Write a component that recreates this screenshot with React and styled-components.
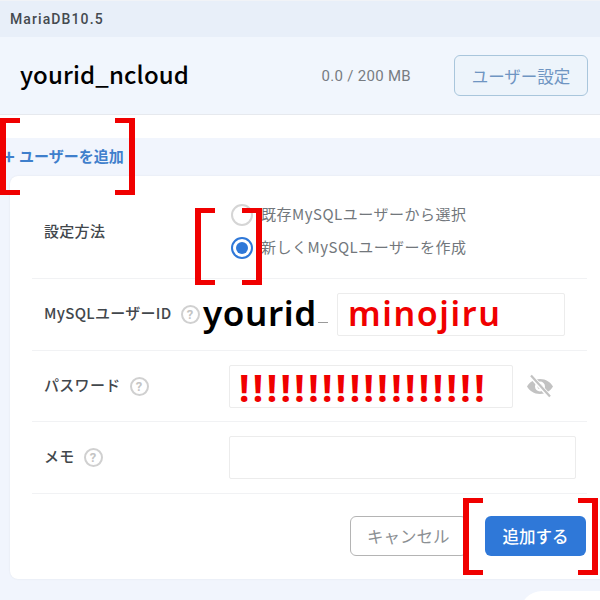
import React from "react";
import styled, { createGlobalStyle } from "styled-components";

const GlobalStyle = createGlobalStyle`
  html, body {
    margin: 0;
    padding: 0;
    background: #ffffff;
  }
  * {
    box-sizing: border-box;
  }
`;

const FONT = `"Noto Sans CJK JP", "Noto Sans", sans-serif`;

const Page = styled.div`
  position: relative;
  width: 600px;
  height: 600px;
  overflow: hidden;
  background: #ffffff;
  font-family: ${FONT};
`;

const VersionBar = styled.div`
  display: flex;
  align-items: center;
  height: 37px;
  padding-left: 10px;
  background: #e8eff9;
  border-top: 1px solid #f1f3f7;
  font-family: Roboto, sans-serif;
  font-size: 14px;
  font-weight: 500;
  letter-spacing: 1.1px;
  color: #444a50;
`;

const DbHeader = styled.div`
  display: flex;
  align-items: center;
  height: 78px;
  padding: 0 12px 0 20px;
  background: #f1f6fd;
  border-bottom: 1px solid #e6e9ee;
`;

const DbName = styled.div`
  flex: 1;
  padding-bottom: 5px;
  font-size: 24px;
  font-weight: 500;
  letter-spacing: 0.15px;
  color: #000000;
`;

const Usage = styled.div`
  margin-right: 43px;
  font-family: Roboto, sans-serif;
  font-size: 15px;
  letter-spacing: 0.3px;
  color: #777c82;
`;

const SettingsButton = styled.button`
  width: 134px;
  height: 41px;
  padding: 0;
  border: 1px solid #a9c6dc;
  border-radius: 6px;
  background: #edf4fb;
  font-family: ${FONT};
  font-size: 16.5px;
  color: #6f95c2;
`;

const Section = styled.div`
  margin-top: 23px;
  height: 462px;
  padding-left: 10px;
  background: #f1f5fd;
`;

const AddLink = styled.div`
  display: flex;
  align-items: center;
  height: 38px;
  margin-left: -10px;
  padding-bottom: 3px;
  font-size: 15px;
  font-weight: 700;
  color: #3f7fcc;
`;

const Plus = styled.span`
  width: 19px;
  padding-left: 3px;
  font-size: 20px;
  line-height: 20px;
`;

const Card = styled.div`
  width: 620px;
  height: 403px;
  padding: 0 33px 0 22px;
  background: #ffffff;
  border-radius: 8px;
  box-shadow: 0 0 2px rgba(0, 0, 0, 0.08);
`;

const Row = styled.div`
  position: relative;
  display: flex;
  align-items: ${(props) => (props.$top ? "flex-start" : "center")};
  height: ${(props) => props.$height}px;
  width: 555px;
  border-bottom: 1px solid #f1f2f4;
`;

const Label = styled.div`
  display: flex;
  align-items: center;
  gap: 9px;
  width: ${(props) => props.$width || 197}px;
  padding: 0 0 4px 12px;
  flex-shrink: 0;
  font-size: 15px;
  font-weight: 500;
  letter-spacing: 0.3px;
  color: #42474c;
`;

const MethodLabel = styled(Label)`
  margin-top: 44px;
  padding-bottom: 0;
`;

const Radios = styled.div`
  display: flex;
  flex-direction: column;
  gap: 9px;
  margin: 27px 0 0 2px;
`;

const RadioRow = styled.div`
  display: flex;
  align-items: center;
  gap: 8px;
  height: 24px;
  font-size: 15px;
  letter-spacing: 0.5px;
  color: #72777c;
`;

const RadioText = styled.span`
  margin-top: -3px;
`;

const Radio = styled.span`
  display: flex;
  align-items: center;
  justify-content: center;
  width: 22px;
  height: 22px;
  border: 2px solid ${(props) => (props.$on ? "#2f78d8" : "#d5d5d5")};
  border-radius: 50%;
  background: #ffffff;
  &::after {
    content: "";
    display: ${(props) => (props.$on ? "block" : "none")};
    width: 12px;
    height: 12px;
    border-radius: 50%;
    background: #2f78d8;
  }
`;

const Help = styled.span`
  display: flex;
  align-items: center;
  justify-content: center;
  width: 19px;
  height: 19px;
  margin-top: 4px;
  border: 2px solid #d0d0d0;
  border-radius: 50%;
  font-family: Roboto, sans-serif;
  font-size: 13px;
  font-weight: 700;
  color: #c4c4c4;
`;

const Field = styled.input`
  display: block;
  width: ${(props) => props.$width}px;
  height: 43px;
  padding: 0 10px 3px;
  border: 1px solid #ececec;
  border-radius: 2px;
  background: #ffffff;
  outline: none;
  font-family: "Noto Sans", sans-serif;
  font-size: 34px;
  font-weight: 600;
  letter-spacing: 1.6px;
  color: #f00000;
`;

const PasswordField = styled(Field)`
  padding: 2px 9px 0;
  font-size: 37px;
  font-weight: 700;
  letter-spacing: 3.4px;
`;

const IdPrefix = styled.div`
  position: absolute;
  left: 171px;
  top: 12px;
  font-family: "Noto Sans", sans-serif;
  font-size: 35px;
  font-weight: 600;
  letter-spacing: 0.6px;
  line-height: 44px;
  color: #000000;
`;

const Underscore = styled.span`
  width: 10px;
  height: 1px;
  margin: 16px 9px 0 0;
  background: #9a9a9a;
`;

const EyeButton = styled.span`
  display: flex;
  margin-left: 13px;
  color: #c2c2c2;
`;

const Footer = styled.div`
  display: flex;
  justify-content: flex-end;
  gap: 18px;
  width: 554px;
  padding-top: 22px;
`;

const CancelButton = styled.button`
  width: 117px;
  height: 40px;
  padding: 0 0 0 16px;
  border: 1px solid #b4b4b4;
  border-radius: 6px;
  background: #ffffff;
  font-family: ${FONT};
  font-size: 16.5px;
  color: #8b8f93;
  text-align: left;
`;

const SubmitButton = styled.button`
  width: 101px;
  height: 40px;
  padding: 0;
  border: none;
  border-radius: 6px;
  background: #2f78d8;
  font-family: ${FONT};
  font-size: 16.5px;
  font-weight: 500;
  color: #ffffff;
`;

const Corner = styled.div`
  position: absolute;
  left: 520px;
  top: 591px;
  width: 110px;
  height: 40px;
  border-radius: 22px 0 0 0;
  background: #ffffff;
`;

// Red brackets drawn on top of the screenshot
const Bracket = styled.div`
  position: absolute;
  left: ${(props) => props.$left}px;
  top: ${(props) => props.$top}px;
  width: 20px;
  height: 77px;
  border: solid #f00000;
  border-width: 5px 0;
  ${(props) => (props.$right ? "border-right-width: 6px;" : "border-left-width: 6px;")}
`;

const EyeOff = () => (
  <svg width="28" height="24" viewBox="0 0 28 24" fill="currentColor">
    <path d="M14 5C8 5 3.400 8.400 1 12.500 3.400 16.600 8 20 14 20s10.600-3.400 13-7.500C24.600 8.400 20 5 14 5zm0 12.500a5 5 0 1 1 0-10 5 5 0 0 1 0 10z" />
    <circle cx="14" cy="12.500" r="2.500" />
    <path d="M5 2 23 22" stroke="#ffffff" strokeWidth="4.500" />
    <path d="M5 1.500 24 22.500" stroke="currentColor" strokeWidth="2.200" />
  </svg>
);

const App = () => {
  return (
    <Page>
      <GlobalStyle />
      <VersionBar>MariaDB10.5</VersionBar>
      <DbHeader>
        <DbName>yourid_ncloud</DbName>
        <Usage>0.0 / 200 MB</Usage>
        <SettingsButton>ユーザー設定</SettingsButton>
      </DbHeader>
      <Section>
        <AddLink>
          <Plus>+</Plus>ユーザーを追加
        </AddLink>
        <Card>
          <Row $top $height={103}>
            <MethodLabel>設定方法</MethodLabel>
            <Radios>
              <RadioRow>
                <Radio />
                <RadioText>既存MySQLユーザーから選択</RadioText>
              </RadioRow>
              <RadioRow>
                <Radio $on />
                <RadioText>新しくMySQLユーザーを作成</RadioText>
              </RadioRow>
            </Radios>
          </Row>
          <Row $height={72}>
            <Label $width={286}>
              MySQLユーザーID <Help>?</Help>
            </Label>
            <Underscore />
            <Field $width={228} value="minojiru" readOnly />
            <IdPrefix>yourid</IdPrefix>
          </Row>
          <Row $height={71}>
            <Label>
              パスワード <Help>?</Help>
            </Label>
            <PasswordField $width={284} value="!!!!!!!!!!!!!!!!!!" readOnly />
            <EyeButton>
              <EyeOff />
            </EyeButton>
          </Row>
          <Row $height={72}>
            <Label>
              メモ <Help>?</Help>
            </Label>
            <Field $width={347} />
          </Row>
          <Footer>
            <CancelButton>キャンセル</CancelButton>
            <SubmitButton>追加する</SubmitButton>
          </Footer>
        </Card>
      </Section>
      <Corner />
      <Bracket $left={0} $top={118} />
      <Bracket $left={115} $top={118} $right />
      <Bracket $left={195} $top={208} />
      <Bracket $left={242} $top={208} $right />
      <Bracket $left={463} $top={498} />
      <Bracket $left={578} $top={498} $right />
    </Page>
  );
};

export default App;
